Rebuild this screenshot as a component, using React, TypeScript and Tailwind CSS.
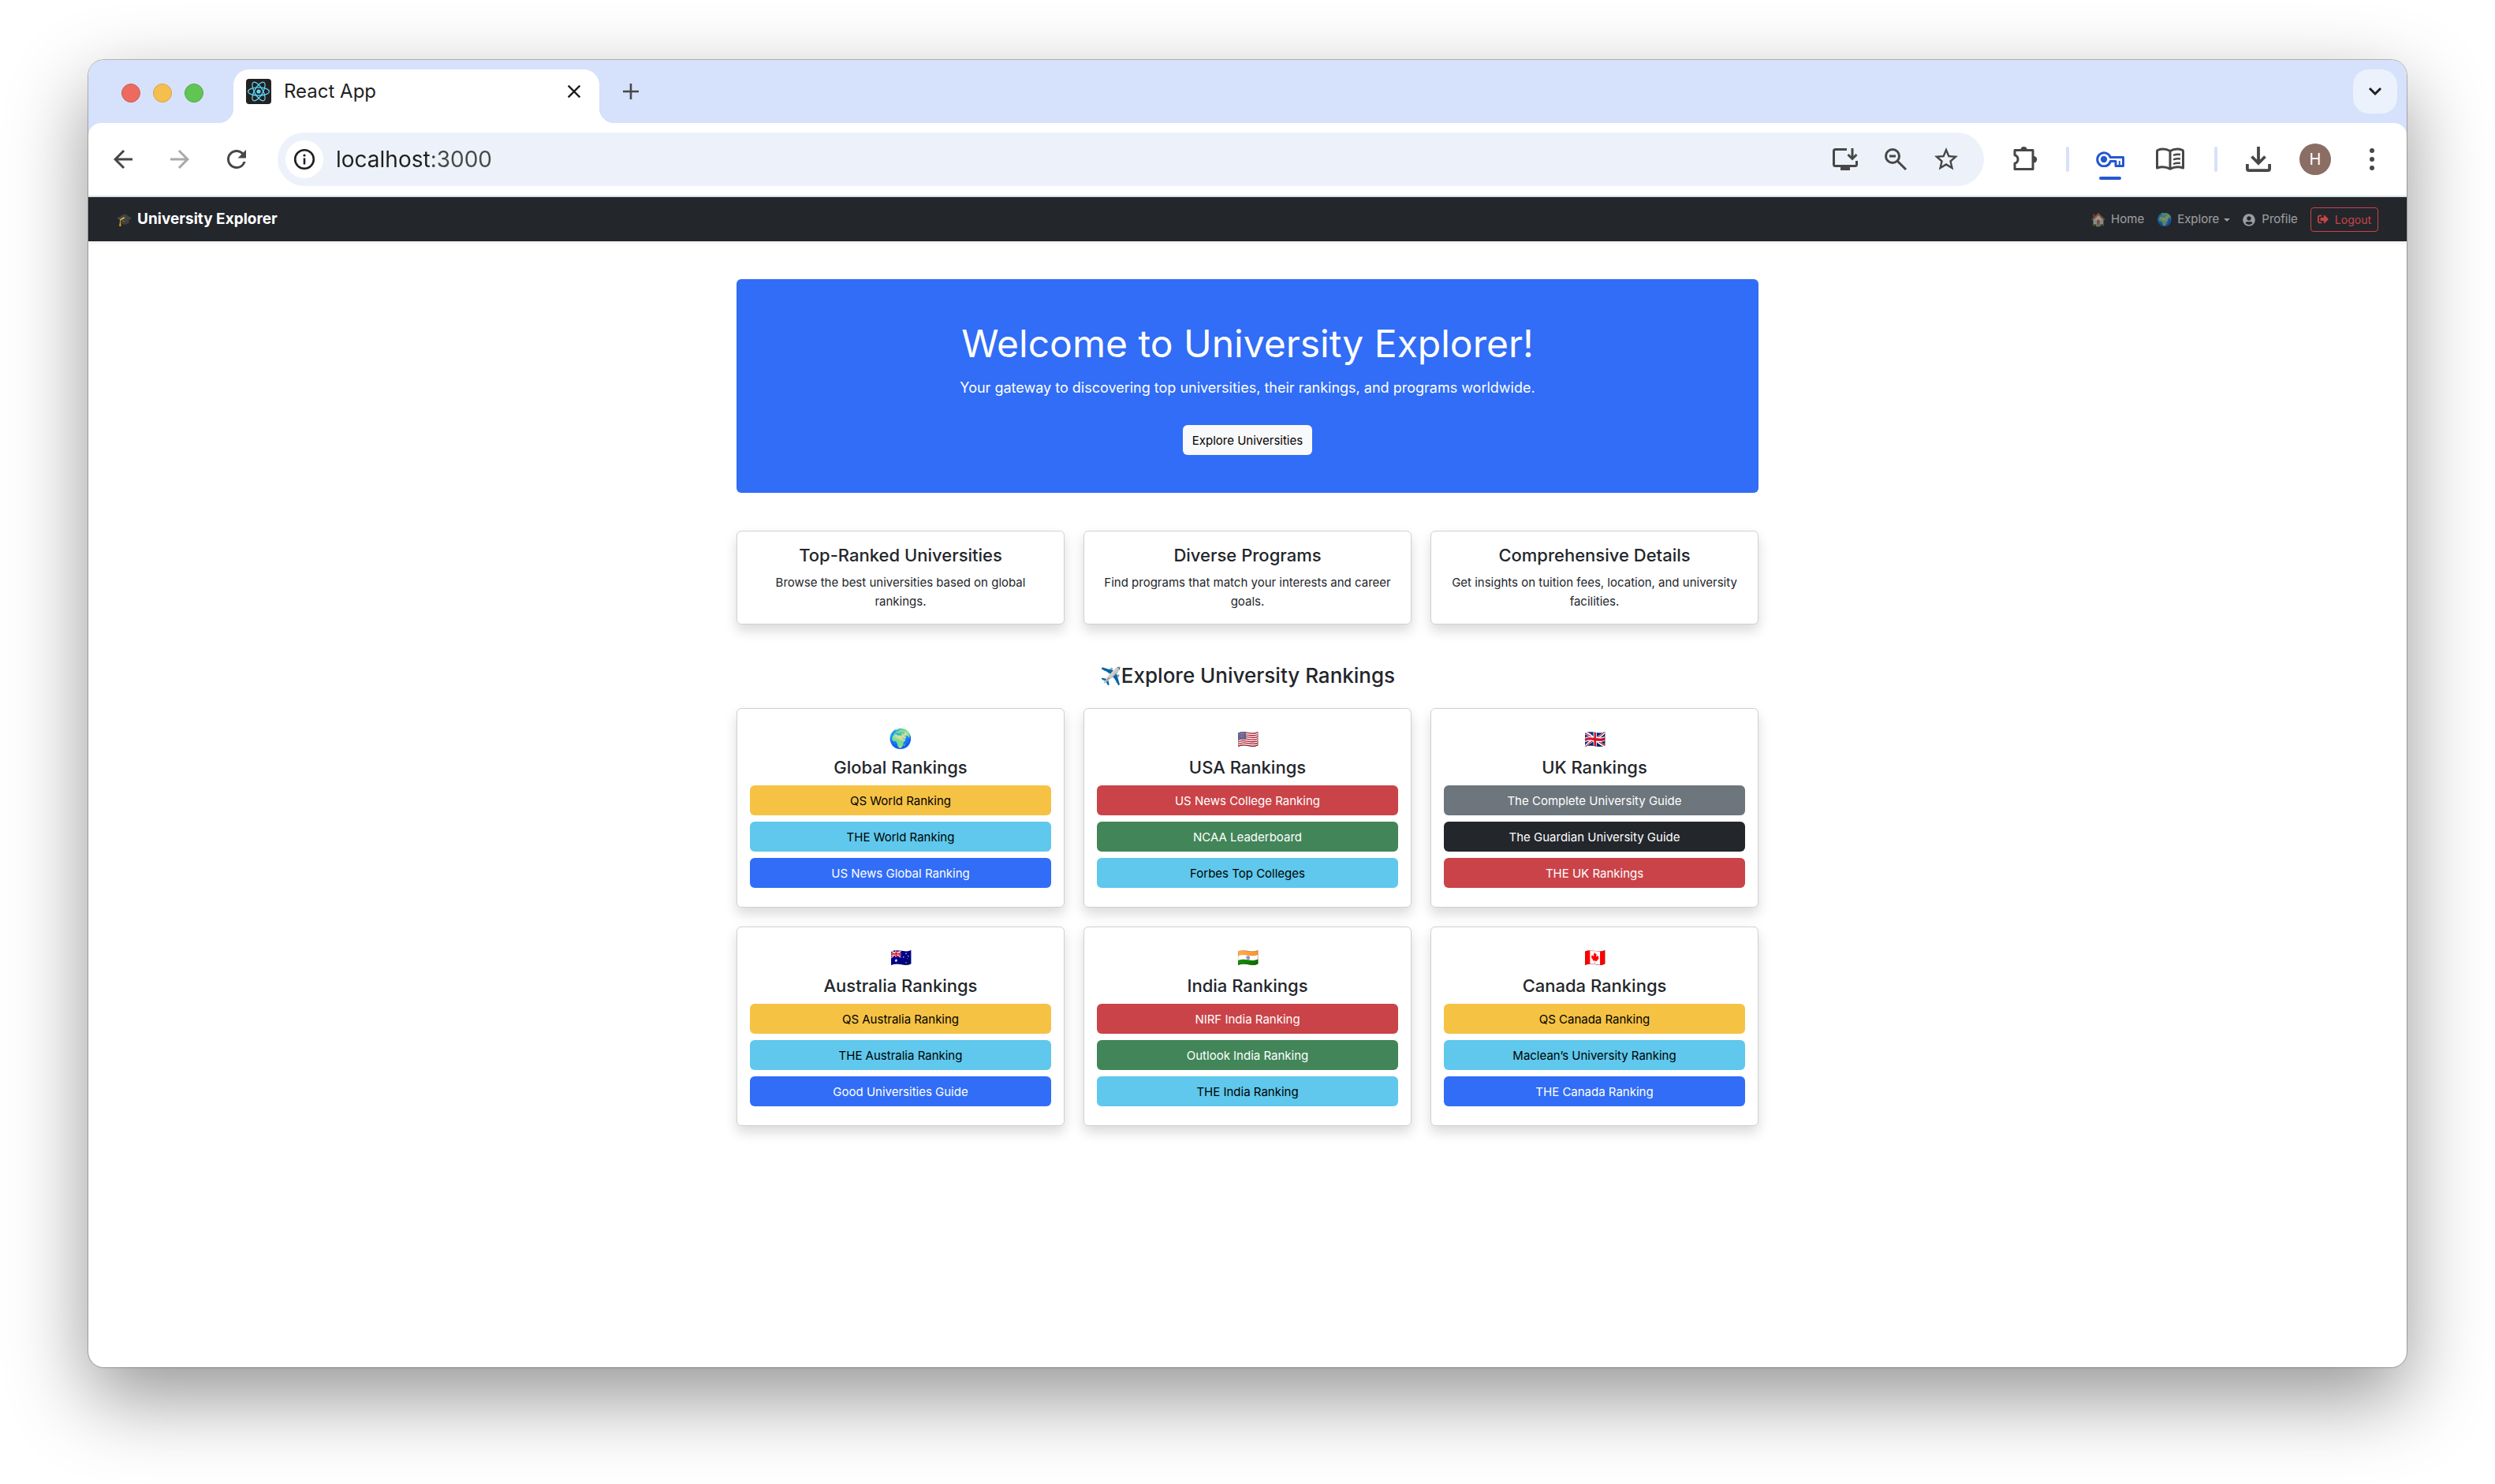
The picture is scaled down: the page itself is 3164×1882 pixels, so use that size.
import type { ReactNode } from 'react';
import { FaSignOutAlt, FaUserCircle } from 'react-icons/fa';
import { MdArrowBack, MdArrowForward, MdClose, MdRefresh, MdStarBorder } from 'react-icons/md';

type Tone = 'warning' | 'info' | 'primary' | 'danger' | 'success' | 'secondary' | 'dark';

const tones: Record<Tone, string> = {
  warning: 'bg-[#f5c244] text-black',
  info: 'bg-[#5fc8ec] text-black',
  primary: 'bg-[#316df6] text-white',
  danger: 'bg-[#ca4348] text-white',
  success: 'bg-[#428558] text-white',
  secondary: 'bg-[#6d757d] text-white',
  dark: 'bg-[#23262b] text-white',
};

const features = [
  { title: 'Top-Ranked Universities', text: 'Browse the best universities based on global rankings.' },
  { title: 'Diverse Programs', text: 'Find programs that match your interests and career goals.' },
  { title: 'Comprehensive Details', text: 'Get insights on tuition fees, location, and university facilities.' },
];

const rankings: { emoji: string; emojiSize: string; title: string; links: [string, Tone][] }[] = [
  {
    emoji: '🌍',
    emojiSize: 'text-[24px]',
    title: 'Global Rankings',
    links: [
      ['QS World Ranking', 'warning'],
      ['THE World Ranking', 'info'],
      ['US News Global Ranking', 'primary'],
    ],
  },
  {
    emoji: '🇺🇸',
    emojiSize: 'text-[22px]',
    title: 'USA Rankings',
    links: [
      ['US News College Ranking', 'danger'],
      ['NCAA Leaderboard', 'success'],
      ['Forbes Top Colleges', 'info'],
    ],
  },
  {
    emoji: '🇬🇧',
    emojiSize: 'text-[22px]',
    title: 'UK Rankings',
    links: [
      ['The Complete University Guide', 'secondary'],
      ['The Guardian University Guide', 'dark'],
      ['THE UK Rankings', 'danger'],
    ],
  },
  {
    emoji: '🇦🇺',
    emojiSize: 'text-[22px]',
    title: 'Australia Rankings',
    links: [
      ['QS Australia Ranking', 'warning'],
      ['THE Australia Ranking', 'info'],
      ['Good Universities Guide', 'primary'],
    ],
  },
  {
    emoji: '🇮🇳',
    emojiSize: 'text-[22px]',
    title: 'India Rankings',
    links: [
      ['NIRF India Ranking', 'danger'],
      ['Outlook India Ranking', 'success'],
      ['THE India Ranking', 'info'],
    ],
  },
  {
    emoji: '🇨🇦',
    emojiSize: 'text-[22px]',
    title: 'Canada Rankings',
    links: [
      ['QS Canada Ranking', 'warning'],
      ['Maclean’s University Ranking', 'info'],
      ['THE Canada Ranking', 'primary'],
    ],
  },
];

function ReactLogo() {
  return (
    <svg viewBox="0 0 32 32" className="size-8 shrink-0" aria-hidden="true">
      <rect width="32" height="32" rx="4" fill="#222222" />
      <g fill="none" stroke="#61dafb" strokeWidth="1.2">
        <ellipse cx="16" cy="16" rx="13.4" ry="5.2" />
        <ellipse cx="16" cy="16" rx="13.4" ry="5.2" transform="rotate(60 16 16)" />
        <ellipse cx="16" cy="16" rx="13.4" ry="5.2" transform="rotate(120 16 16)" />
      </g>
      <circle cx="16" cy="16" r="2.6" fill="#61dafb" />
    </svg>
  );
}

function InfoIcon() {
  return (
    <svg viewBox="0 0 28 28" className="size-7" fill="none" stroke="#1f1f1f" strokeWidth="2.6" aria-hidden="true">
      <circle cx="14" cy="14" r="11.8" />
      <path d="M14 12.6v7.8" />
      <circle cx="14" cy="9" r="1.6" fill="#1f1f1f" stroke="none" />
    </svg>
  );
}

function InstallIcon() {
  return (
    <svg viewBox="0 0 36 36" className="size-9" fill="none" stroke="#474747" strokeWidth="3" aria-hidden="true">
      <path d="M20 5.5H5.500a2 2 0 0 0-2 2v17a2 2 0 0 0 2 2h25a2 2 0 0 0 2-2V20" />
      <path d="M27 4v13M21.500 12l5.500 5.500 5.500-5.500" />
      <path d="M12 27h12v5H12z" fill="#474747" stroke="none" />
    </svg>
  );
}

function ZoomOutIcon() {
  return (
    <svg viewBox="0 0 36 36" className="size-9" fill="none" stroke="#474747" strokeWidth="3" aria-hidden="true">
      <circle cx="14" cy="14" r="8.5" />
      <path d="M20.200 20.200 31 31M10 14h8" />
    </svg>
  );
}

function PuzzleIcon() {
  return (
    <svg viewBox="0 0 36 36" className="size-9" aria-hidden="true">
      <path
        d="M5 6.500h23v24H5v-7.200c2.600-.7 4-2.800 4-5.300s-1.400-4.600-4-5.300z"
        fill="none"
        stroke="#474747"
        strokeWidth="3"
        strokeLinejoin="round"
      />
      <path d="M12.500 6a4 4 0 0 1 8 0z" fill="#474747" />
      <path d="M29 14a4.200 4.200 0 0 1 0 8.400z" fill="#474747" />
    </svg>
  );
}

function KeyIcon() {
  return (
    <svg viewBox="0 0 36 20" className="h-5 w-9" aria-hidden="true">
      <path
        d="M18.200 7.500H34.500v11h-9.500v-6H18.400A8.500 8.500 0 1 1 18.200 7.500Z"
        fill="none"
        stroke="#2557d0"
        strokeWidth="3"
        strokeLinejoin="round"
      />
      <circle cx="10" cy="10" r="4.200" fill="#2557d0" />
      <path d="M29.800 12v6" stroke="#2557d0" strokeWidth="2" />
    </svg>
  );
}

function BookIcon() {
  return (
    <svg viewBox="0 0 36 30" className="h-[30px] w-9" fill="none" stroke="#474747" aria-hidden="true">
      <path
        d="M18 4.500C13.500 2 7 1.600 2.500 3.300a1.500 1.500 0 0 0-1 1.400V26c5-1.900 11.500-1.600 16.500 1.300 5-2.900 11.500-3.200 16.500-1.300V4.700a1.500 1.500 0 0 0-1-1.400C29 1.600 22.500 2 18 4.500ZM18 4.500v22"
        strokeWidth="3"
        strokeLinejoin="round"
      />
      <path d="M22 10c3-1.300 6-1.500 9-1M22 15.500c3-1.300 6-1.500 9-1M22 21c3-1.300 6-1.500 9-1" strokeWidth="2.4" />
    </svg>
  );
}

function DownloadIcon() {
  return (
    <svg viewBox="0 0 32 32" className="size-8" fill="none" stroke="#474747" strokeWidth="3.800" aria-hidden="true">
      <path d="M16 0v20M7.500 12.500 16 21l8.500-8.500" />
      <path d="M1.900 22v6.100a2 2 0 0 0 2 2h24.200a2 2 0 0 0 2-2V22" />
    </svg>
  );
}

function IconButton({ label, className = '', children }: { label: string; className?: string; children: ReactNode }) {
  return (
    <button
      type="button"
      aria-label={label}
      className={`relative flex size-14 shrink-0 items-center justify-center rounded-full text-[#474747] ${className}`}
    >
      {children}
    </button>
  );
}

function TabStrip() {
  return (
    <div className="flex h-20 items-end bg-[#d6e1fb]">
      <div className="ml-[42px] flex gap-4 pb-[26px]">
        <button type="button" aria-label="Close window" className="size-6 rounded-full border border-[#d35a50] bg-[#ed6a5e]" />
        <button type="button" aria-label="Minimize window" className="size-6 rounded-full border border-[#d8a442] bg-[#f5bf4f]" />
        <button type="button" aria-label="Zoom window" className="size-6 rounded-full border border-[#52a843] bg-[#61c554]" />
      </div>
      <div className="relative ml-[38px] flex h-[68px] w-[464px] items-center gap-4 rounded-t-[20px] bg-white px-4 pb-3 before:absolute before:bottom-0 before:-left-5 before:size-5 before:bg-[radial-gradient(circle_at_top_left,transparent_20px,white_21px)] after:absolute after:-right-5 after:bottom-0 after:size-5 after:bg-[radial-gradient(circle_at_top_right,transparent_20px,white_21px)]">
        <ReactLogo />
        <span className="flex-1 text-2xl text-[#1f1f1f]">React App</span>
        <button type="button" aria-label="Close tab" className="flex size-8 items-center justify-center text-[#1f1f1f]">
          <MdClose className="size-7" />
        </button>
      </div>
      <button type="button" aria-label="New tab" className="mb-3 ml-3 flex size-14 items-center justify-center">
        <svg viewBox="0 0 20 20" className="size-5" stroke="#474747" strokeWidth="2.600" aria-hidden="true">
          <path d="M10 0v20M0 10h20" />
        </svg>
      </button>
      <button
        type="button"
        aria-label="Search tabs"
        className="mr-3 mb-3 ml-auto flex size-14 items-center justify-center rounded-[20px] bg-[#ebf2fc]"
      >
        <svg viewBox="0 0 18 12" className="h-3 w-[18px]" fill="none" stroke="#1f1f1f" strokeWidth="3" aria-hidden="true">
          <path d="M2 2l7 7 7-7" />
        </svg>
      </button>
    </div>
  );
}

function Toolbar() {
  return (
    <div className="bg-[#d6e1fb]">
      <div className="flex h-[94px] items-center rounded-t-2xl border-b-2 border-[#dde3e4] bg-white px-4">
        <div className="flex gap-4">
          <IconButton label="Back">
            <MdArrowBack className="size-9" />
          </IconButton>
          <IconButton label="Forward">
            <MdArrowForward className="size-9 text-[#a9a9a9]" />
          </IconButton>
          <IconButton label="Reload">
            <MdRefresh className="size-9" />
          </IconButton>
        </div>
        <div className="ml-6 flex h-[68px] flex-1 items-center rounded-full bg-[#edf2fa] pr-[30px] pl-[10px]">
          <button
            type="button"
            aria-label="View site information"
            className="flex size-12 items-center justify-center rounded-full bg-white"
          >
            <InfoIcon />
          </button>
          <input
            aria-label="Address"
            defaultValue="localhost:3000"
            className="ml-4 min-w-0 flex-1 bg-[linear-gradient(to_right,#1f1f1f_120px,#474747_120px)] bg-clip-text text-[28px] leading-9 text-transparent outline-none"
          />
          <div className="flex gap-7">
            <button type="button" aria-label="Install app">
              <InstallIcon />
            </button>
            <button type="button" aria-label="Zoom">
              <ZoomOutIcon />
            </button>
            <button type="button" aria-label="Bookmark this tab" className="text-[#474747]">
              <MdStarBorder className="size-9" />
            </button>
          </div>
        </div>
        <IconButton label="Extensions" className="ml-6">
          <PuzzleIcon />
        </IconButton>
        <div className="mx-6 h-8 w-1 rounded-full bg-[#d6e1fb]" />
        <IconButton label="Password manager">
          <KeyIcon />
          <span className="absolute bottom-0.5 left-1/2 h-1 w-7 -translate-x-1/2 rounded-full bg-[#2557d0]" />
        </IconButton>
        <IconButton label="Reading mode" className="ml-5">
          <BookIcon />
        </IconButton>
        <div className="mr-6 ml-7 h-8 w-1 rounded-full bg-[#d6e1fb]" />
        <IconButton label="Downloads">
          <DownloadIcon />
        </IconButton>
        <IconButton label="Profile H" className="ml-4">
          <span className="flex size-10 items-center justify-center rounded-full bg-[#8a6e64] text-xl text-white">H</span>
        </IconButton>
        <IconButton label="Chrome menu" className="ml-4">
          <svg viewBox="0 0 6 28" className="h-7 w-1.5" fill="#474747" aria-hidden="true">
            <circle cx="3" cy="3" r="3" />
            <circle cx="3" cy="14" r="3" />
            <circle cx="3" cy="25" r="3" />
          </svg>
        </IconButton>
      </div>
    </div>
  );
}

function SiteNav() {
  return (
    <nav className="flex h-14 items-center justify-between bg-[#23262b] px-9 shadow-[0_2px_4px_rgba(0,0,0,0.08)]">
      <a href="#" className="flex items-center gap-1.5 text-[19px] font-bold text-white">
        <span className="text-[16px]">🎓</span>
        University Explorer
      </a>
      <div className="flex items-center gap-4 text-[15px] text-white/55">
        <a href="#home" className="flex items-center gap-1.5">
          <span className="text-[16px]">🏠</span>
          Home
        </a>
        <button type="button" className="flex items-center gap-1.5">
          <span className="text-[16px]">🌍</span>
          Explore
          <span className="mt-0.5 border-x-4 border-t-4 border-x-transparent border-t-white/55" />
        </button>
        <a href="#profile" className="flex items-center gap-2">
          <FaUserCircle className="mt-0.5 size-4" />
          Profile
        </a>
        <button
          type="button"
          className="flex items-center gap-2 rounded-sm border border-[#ca4348] px-2 py-1 text-sm leading-[21px] text-[#ca4348]"
        >
          <FaSignOutAlt className="size-3.5" />
          Logout
        </button>
      </div>
    </nav>
  );
}

const card = 'rounded-md border border-[#cfd0d1] bg-white px-4 text-center shadow-[0_8px_16px_rgba(0,0,0,0.15)]';

function Home() {
  return (
    <main className="mx-auto w-full max-w-[1296px] pt-12">
      <section className="rounded-md bg-[#316df6] p-12 text-center text-white">
        <h1 className="text-[48px] leading-[67px] font-normal">Welcome to University Explorer!</h1>
        <p className="mt-2 text-lg leading-[30px]">
          Your gateway to discovering top universities, their rankings, and programs worldwide.
        </p>
        <button type="button" className="mt-8 rounded-md bg-[#f8f9fa] px-3 pt-0.5 text-[15px] leading-9 text-black">
          Explore Universities
        </button>
      </section>

      <section className="mt-12 grid grid-cols-3 gap-6">
        {features.map((f) => (
          <article key={f.title} className={`${card} py-4`}>
            <h2 className="text-[22px] leading-[29px] font-medium">{f.title}</h2>
            <p className="mt-2 text-[15px] leading-6">{f.text}</p>
          </article>
        ))}
      </section>

      <h2 className="mt-12 flex items-center justify-center text-[26px] leading-[34px] font-medium">
        <span className="text-[22px]">✈️</span>Explore University Rankings
      </h2>

      <section className="mt-6 grid grid-cols-3 gap-6">
        {rankings.map((r) => (
          <article key={r.title} className={`${card} pt-4 pb-6`}>
            <div className={`h-11 leading-[44px] ${r.emojiSize}`}>{r.emoji}</div>
            <h3 className="text-[22px] leading-[29px] font-medium">{r.title}</h3>
            <div className="mt-2 flex flex-col gap-2">
              {r.links.map(([label, tone]) => (
                <a key={label} href="#" className={`rounded-md pt-0.5 text-[15px] leading-9 ${tones[tone]}`}>
                  {label}
                </a>
              ))}
            </div>
          </article>
        ))}
      </section>
    </main>
  );
}

export default function App() {
  return (
    <div className="flex min-h-screen bg-white px-28 pt-[76px] pb-[148px] font-['Inter',sans-serif] text-[#23262b]">
      <div className="flex-1 overflow-hidden rounded-[20px] bg-white shadow-[0_0_0_1px_rgba(0,0,0,0.25),0_38px_100px_rgba(0,0,0,0.42)]">
        <TabStrip />
        <Toolbar />
        <SiteNav />
        <Home />
      </div>
    </div>
  );
}
